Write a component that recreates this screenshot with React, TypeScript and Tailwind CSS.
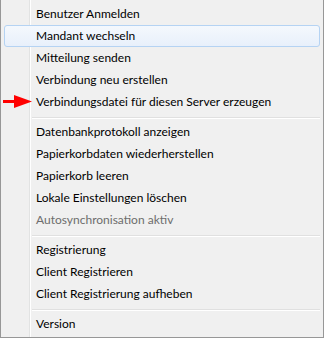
import React from "react";

type Item = { label: string; disabled?: boolean; highlighted?: boolean; arrow?: boolean };

const groups: Item[][] = [
  [
    { label: "Benutzer Anmelden" },
    { label: "Mandant wechseln", highlighted: true },
    { label: "Mitteilung senden" },
    { label: "Verbindung neu erstellen" },
    { label: "Verbindungsdatei für diesen Server erzeugen", arrow: true },
  ],
  [
    { label: "Datenbankprotokoll anzeigen" },
    { label: "Papierkorbdaten wiederherstellen" },
    { label: "Papierkorb leeren" },
    { label: "Lokale Einstellungen löschen" },
    { label: "Autosynchronisation aktiv", disabled: true },
  ],
  [
    { label: "Registrierung" },
    { label: "Client Registrieren" },
    { label: "Client Registrierung aufheben" },
  ],
  [{ label: "Version" }],
];

function Row({ item }: { item: Item }) {
  return (
    <div className="relative h-[22px] flex items-center">
      {item.highlighted && (
        <div className="absolute left-[3px] right-[3px] top-0 bottom-0 rounded-[3px] border border-[#b5d3f3] bg-[linear-gradient(to_bottom,#f4f8fd,#e8f0fb)]" />
      )}
      {item.arrow && (
        <svg className="absolute left-[2px] top-[4px]" width="30" height="14" viewBox="0 0 30 14">
          <rect x="0" y="5" width="14" height="3" fill="#ff0000" />
          <polygon points="11,0 29,6.5 11,13" fill="#ff0000" />
        </svg>
      )}
      <span
        className={`relative pl-[35px] text-[12px] leading-none whitespace-nowrap ${
          item.disabled ? "text-[#6d6d6d]" : "text-black"
        }`}
      >
        {item.label}
      </span>
    </div>
  );
}

function Separator() {
  return (
    <div className="h-[8px] flex flex-col pl-[31px] pr-[3px] pt-[4px]">
      <div className="h-[1px] bg-[#e0e0e0]" />
      <div className="h-[1px] bg-white" />
    </div>
  );
}

export default function App() {
  return (
    <div
      className="w-[324px] h-[338px] bg-[#f0f0f0] border-l border-r border-b border-[#979797] pt-[3px] bg-[linear-gradient(to_right,transparent_28px,#e2e3e3_28px,#e2e3e3_29px,#ffffff_29px,#ffffff_30px,transparent_30px)]"
      style={{ fontFamily: 'Lato, "Noto Sans", sans-serif', backgroundColor: "#f0f0f0" }}
    >
      {groups.map((g, gi) => (
        <React.Fragment key={gi}>
          {gi > 0 && <Separator />}
          {g.map((item) => (
            <Row key={item.label} item={item} />
          ))}
        </React.Fragment>
      ))}
    </div>
  );
}
